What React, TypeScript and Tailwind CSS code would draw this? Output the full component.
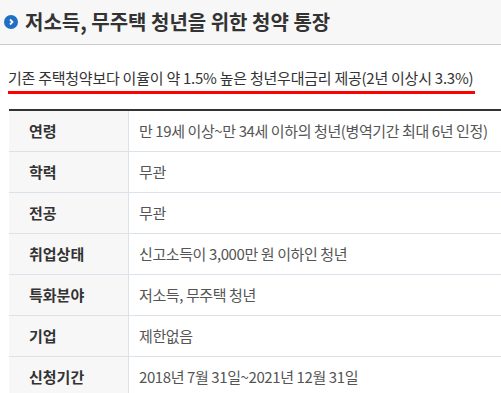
const rows = [
  { label: "연령", value: "만 19세 이상~만 34세 이하의 청년(병역기간 최대 6년 인정)" },
  { label: "학력", value: "무관" },
  { label: "전공", value: "무관" },
  { label: "취업상태", value: "신고소득이 3,000만 원 이하인 청년" },
  { label: "특화분야", value: "저소득, 무주택 청년" },
  { label: "기업", value: "제한없음" },
  { label: "신청기간", value: "2018년 7월 31일~2021년 12월 31일" },
];

export default function App() {
  return (
    <div
      className="w-[501px] h-[393px] overflow-hidden bg-white"
      style={{ fontFamily: '"Noto Sans CJK KR", "Noto Sans", sans-serif' }}
    >
      {/* 제목 */}
      <div className="h-[45px] flex items-center gap-[7px] pl-[4px] bg-[#f7f7f7] border-b border-[#cccccc]">
        <div className="w-[14px] h-[14px] rounded-full bg-[#1f6fc5] flex items-center justify-center">
          <svg width="8" height="8" viewBox="0 0 8 8">
            <path d="M3 1.5 L5.5 4 L3 6.5" stroke="white" strokeWidth="1.8" fill="none" />
          </svg>
        </div>
        <h2 className="text-[20px] font-bold text-[#333]">저소득, 무주택 청년을 위한 청약 통장</h2>
      </div>

      <div className="pt-[20px] pl-[8px]">
        <div className="inline-block text-[15px] text-[#333] leading-[24px] border-b-[3px] border-[#ff0000] pb-[1px] pr-[2px] tracking-[-0.25px]">
          기존 주택청약보다 이율이 약 1.5% 높은 청년우대금리 제공(2년 이상시 3.3%)
        </div>
      </div>

      <div className="mt-[15px] ml-[9px] border-t-2 border-[#333]">
        {rows.map((r) => (
          <div key={r.label} className="flex h-[41px] border-b border-[#dde1ea]">
            <div className="w-[120px] bg-[#f7f7f7] border-r border-[#dde1ea] pl-[20px] flex items-center text-[15px] font-bold text-[#333]">
              {r.label}
            </div>
            <div className="flex-1 pl-[10px] flex items-center text-[15px] text-[#555] tracking-[-0.4px]">
              {r.value}
            </div>
          </div>
        ))}
      </div>
    </div>
  );
}
